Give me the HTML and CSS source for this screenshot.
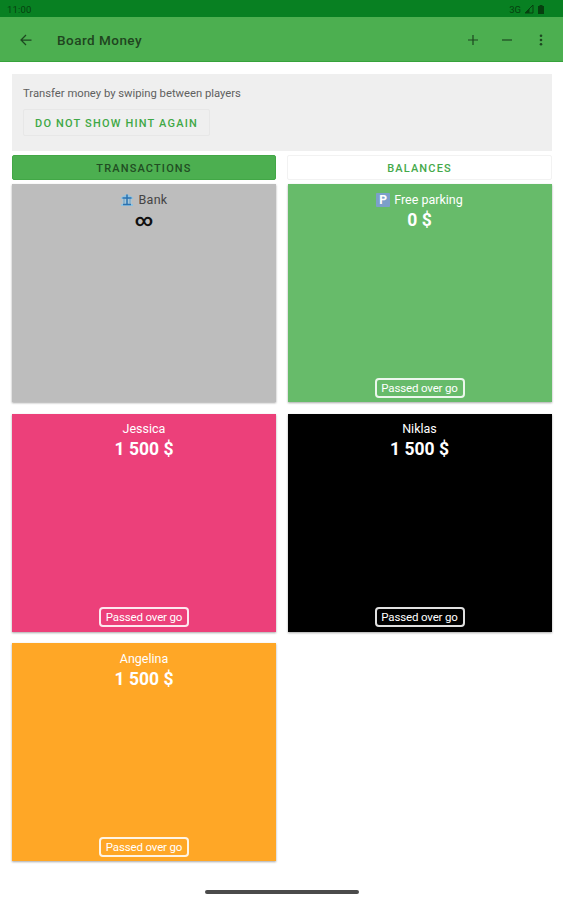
FILE: index.html
```html
<!DOCTYPE html>
<html lang="en">
<head>
<meta charset="utf-8">
<title>Board Money</title>
<link rel="stylesheet" href="styles.css">
</head>
<body>
<div class="status">
  <span class="clock">11:00</span>
  <span class="network">3G</span>
  <svg class="signal" width="10" height="10" viewBox="0 0 10 10"><path d="M1 9 9 1V9Z" fill="none" stroke="currentColor"/><path d="M1 9 5.5 4.5V9Z" fill="currentColor"/></svg>
  <svg width="6" height="9" viewBox="0 0 6 9"><path d="M0 1H1.5V0H4.5V1H6V9H0Z" fill="currentColor"/></svg>
</div>
<header class="toolbar">
  <svg class="back" width="12" height="12" viewBox="0 0 12 12"><path d="M11.5 6H1M6 1 1 6 6 11" fill="none" stroke="currentColor" stroke-width="1.25"/></svg>
  <h1>Board Money</h1>
  <svg class="add" width="10" height="10" viewBox="0 0 10 10"><path d="M0 5H10M5 0V10" stroke="currentColor" stroke-width="1.2"/></svg>
  <svg class="remove" width="10" height="10" viewBox="0 0 10 10"><path d="M0 5H10" stroke="currentColor" stroke-width="1.2"/></svg>
  <svg width="4" height="12" viewBox="0 0 4 12" fill="currentColor"><circle cx="2" cy="1.7" r="1.3"/><circle cx="2" cy="6" r="1.3"/><circle cx="2" cy="10.3" r="1.3"/></svg>
</header>
<main>
  <section class="hint">
    <p>Transfer money by swiping between players</p>
    <button class="dismiss">DO NOT SHOW HINT AGAIN</button>
  </section>
  <nav class="tabs">
    <button class="tab selected">TRANSACTIONS</button>
    <button class="tab">BALANCES</button>
  </nav>
  <section class="players">
    <article class="card bank">
      <h2><svg class="emoji" width="14" height="14" viewBox="0 0 14 14"><path d="M1 4.500 7 1 13 4.500V6H1ZM1 11H13V13H1Z" fill="#8fc3e2"/><path d="M2.500 6H11.500V11H2.500Z" fill="#a9c8da"/><path d="M7 1.500V12M2.500 5H11.500M3 11.500H11" stroke="#2c72b0" stroke-width="1.500"/><path d="M4 6V11M10 6V11" stroke="#6b9dc0"/></svg>Bank</h2>
      <strong class="infinity">∞</strong>
    </article>
    <article class="card parking">
      <h2><span class="emoji p-sign">P</span>Free parking</h2>
      <strong>0 $</strong>
      <button class="go">Passed over go</button>
    </article>
    <article class="card pink">
      <h2>Jessica</h2><strong>1 500 $</strong><button class="go">Passed over go</button>
    </article>
    <article class="card black">
      <h2>Niklas</h2><strong>1 500 $</strong><button class="go">Passed over go</button>
    </article>
    <article class="card orange">
      <h2>Angelina</h2><strong>1 500 $</strong><button class="go">Passed over go</button>
    </article>
  </section>
</main>
<div class="home-bar"></div>
</body>
</html>
```
FILE: styles.css
```css
* { box-sizing: border-box; }
body {
  margin: 0;
  height: 900px;
  overflow: hidden;
  background: #fff;
  font-family: Roboto, "Liberation Sans", sans-serif;
}
h1, h2, p { margin: 0; font-weight: 400; }
button { font-family: inherit; margin: 0; padding: 0; background: none; white-space: nowrap; }
svg { display: block; flex: none; }

.status {
  display: flex;
  align-items: center;
  height: 17px;
  padding: 1px 19px 0 7px;
  background: #088022;
  color: #06400f;
  font-size: 9.5px;
}
.clock { letter-spacing: 0.2px; }
.network { margin-left: auto; }
.signal { margin: 0 4px 0 3px; }

.toolbar {
  display: flex;
  align-items: center;
  height: 45px;
  padding: 1px 20px 0 20px;
  background: #4caf50;
  border-bottom: 1px solid #36a33b;
  color: #1d4720;
}
.toolbar h1 {
  margin-left: 25px;
  font-size: 13.5px;
  font-weight: 500;
  line-height: 18px;
  letter-spacing: 0.48px;
  color: #20451f;
}
.toolbar h1 { padding-top: 1px; }
.add { margin-left: auto; }
.remove { margin: 0 27px 0 24px; }

main { padding: 12px 11px 0 12px; }
.hint {
  height: 77px;
  padding: 11px;
  background: #efefef;
}
.hint p {
  font-size: 11.25px;
  line-height: 17px;
  color: #606060;
}
.dismiss {
  display: block;
  width: 187px;
  height: 27px;
  margin-top: 7px;
  padding-top: 1px;
  border: 1px solid #e7e7e7;
  border-radius: 2px;
  font-size: 11px;
  font-weight: 500;
  letter-spacing: 1.18px;
  color: #3fa846;
}
.tabs {
  display: grid;
  grid-template-columns: 264px 265px;
  column-gap: 11px;
  margin-top: 4px;
}
.tab {
  height: 25px;
  padding-top: 1px;
  border: 1px solid #f2f2f2;
  border-radius: 2px;
  font-size: 11px;
  font-weight: 500;
  letter-spacing: 1.15px;
  color: #45a94a;
}
.selected { background: #4caf50; border-color: #42a746; color: #214d23; }

.players {
  display: grid;
  grid-template-columns: 264px 264px;
  grid-auto-rows: 218px;
  gap: 11.5px;
  margin-top: 4px;
}
.card {
  display: flex;
  flex-direction: column;
  align-items: center;
  padding: 6.5px 0 4.5px;
  color: #fff;
  box-shadow: 0 1px 2px rgba(0, 0, 0, 0.35);
}
.card h2 {
  display: flex;
  align-items: center;
  font-size: 12.5px;
  line-height: 18px;
}
.card strong { font-size: 17.5px; font-weight: 700; line-height: 22px; }
.bank { background: #bdbdbd; color: #111; }
.bank h2 { color: #444; letter-spacing: 0.3px; }
.parking { background: #67bb6a; }
.pink { background: #ec407a; }
.black { background: #000; }
.orange { background: #ffa726; }
.emoji { margin-right: 4px; }
.p-sign {
  width: 14px;
  height: 14px;
  background: #7c9fca;
  border-radius: 1px;
  font-size: 12px;
  font-weight: 700;
  line-height: 14px;
  text-align: center;
}
.go {
  width: 90px;
  height: 20px;
  margin-top: auto;
  border: 2px solid rgba(255, 255, 255, 0.88);
  border-radius: 4px;
  font-size: 11.5px;
  line-height: 16px;
  letter-spacing: -0.15px;
  color: #fff;
}

.home-bar {
  width: 154px;
  height: 4px;
  margin: 28.5px auto 0;
  border-radius: 2px;
  background: #4b4b4b;
}
```
